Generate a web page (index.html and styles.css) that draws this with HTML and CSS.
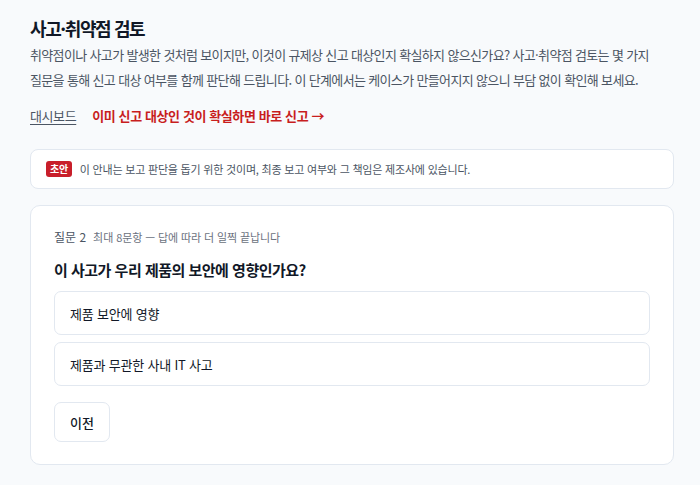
FILE: index.html
```html
<!DOCTYPE html>
<html lang="ko">
<head>
  <meta charset="UTF-8" />
  <meta name="viewport" content="width=device-width, initial-scale=1.0"/>
  <title>사고·취약점 검토</title>
  <link rel="stylesheet" href="styles.css">
</head>
<body>
  <div class="page">
    <h1>사고·취약점 검토</h1>
    <p class="intro">취약점이나 사고가 발생한 것처럼 보이지만, 이것이 규제상 신고 대상인지 확실하지 않으신가요? 사고·취약점 검토는 몇 가지 질문을 통해 신고 대상 여부를 함께 판단해 드립니다. 이 단계에서는 케이스가 만들어지지 않으니 부담 없이 확인해 보세요.</p>

    <div class="links">
      <a href="#" class="back">대시보드</a>
      <a href="#" class="direct">이미 신고 대상인 것이 확실하면 바로 신고 →</a>
    </div>

    <div class="notice">
      <span class="badge">초안</span>
      <span>이 안내는 보고 판단을 돕기 위한 것이며, 최종 보고 여부와 그 책임은 제조사에 있습니다.</span>
    </div>

    <div class="card">
      <div class="step">
        <span class="step-no">질문 2</span>
        <span class="step-info">최대 8문항 — 답에 따라 더 일찍 끝납니다</span>
      </div>
      <h2>이 사고가 우리 제품의 보안에 영향인가요?</h2>
      <div class="options">
        <button class="option">제품 보안에 영향</button>
        <button class="option">제품과 무관한 사내 IT 사고</button>
      </div>
      <button class="prev">이전</button>
    </div>
  </div>
</body>
</html>
```

FILE: styles.css
```css
body {
  margin: 0;
  padding: 0;
  background: #f8fafc;
  color: #111827;
  font-family: "Noto Sans CJK KR", "Noto Sans", sans-serif;
  word-break: keep-all;
}

.page {
  padding: 14px 26px 20px 30px;
}

h1 {
  font-size: 18px;
  font-weight: 700;
  letter-spacing: -1.4px;
  margin: 0;
  line-height: 28px;
}

.intro {
  font-size: 13px;
  letter-spacing: -0.65px;
  line-height: 25px;
  color: #4b5563;
  margin: 0;
}

.links {
  display: flex;
  gap: 16px;
  margin-top: 13px;
  font-size: 13px;
  letter-spacing: -0.4px;
  line-height: 22px;
}

.links a {
  text-decoration: none;
}

.back {
  color: #4b5563;
  text-decoration: underline !important;
  text-underline-offset: 3px;
}

.direct {
  color: #c81e1e;
  font-weight: 700;
}

.notice {
  display: flex;
  align-items: center;
  gap: 8px;
  margin-top: 22px;
  padding: 10px 15px;
  background: #fff;
  border: 1px solid #e2e8f0;
  border-radius: 8px;
  font-size: 11px;
  letter-spacing: -0.2px;
  line-height: 18px;
  color: #4b5563;
}

.badge {
  background: #c81e2a;
  color: #fff;
  font-size: 10px;
  font-weight: 700;
  letter-spacing: -0.3px;
  line-height: 16px;
  padding: 0 4px;
  border-radius: 3px;
}

.card {
  margin-top: 16px;
  padding: 22px 23px 22px;
  background: #fff;
  border: 1px solid #e2e8f0;
  border-radius: 10px;
}

.step {
  display: flex;
  gap: 7px;
  align-items: baseline;
  line-height: 18px;
}

.step-no {
  font-size: 12px;
  color: #4b5563;
}

.step-info {
  font-size: 11px;
  letter-spacing: -0.1px;
  color: #6b7280;
}

h2 {
  font-size: 15px;
  font-weight: 700;
  letter-spacing: -0.5px;
  margin: 13px 0 10px;
  line-height: 22px;
}

.options {
  display: flex;
  flex-direction: column;
  gap: 7px;
}

button {
  font-family: inherit;
  cursor: pointer;
}

.option {
  text-align: left;
  height: 44px;
  padding: 0 15px;
  background: #fff;
  border: 1px solid #e2e8f0;
  border-radius: 7px;
  font-size: 13px;
  letter-spacing: -0.2px;
  color: #111827;
}

.prev {
  margin-top: 16px;
  width: 56px;
  height: 40px;
  background: #fff;
  border: 1px solid #e2e8f0;
  border-radius: 7px;
  font-size: 13px;
  font-weight: 500;
  color: #111827;
}
```
